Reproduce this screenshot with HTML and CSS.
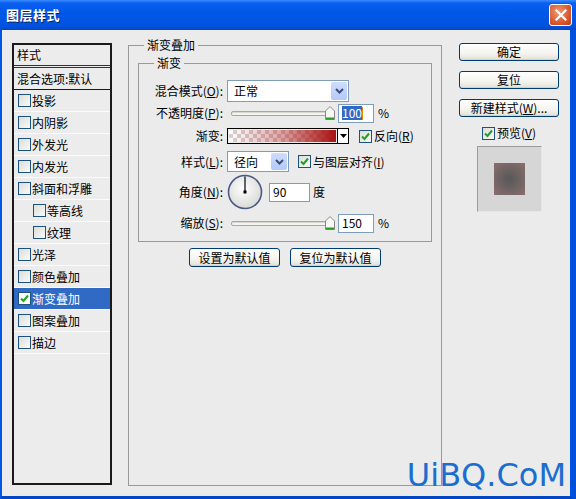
FILE: index.html
```html
<!DOCTYPE html>
<html lang="zh-CN">
<head>
  <meta charset="UTF-8"/>
  <title>图层样式</title>
  <link rel="stylesheet" href="styles.css">
</head>
<body>
  <div class="window">

    <!-- Title bar -->
    <div class="titlebar">
      <span class="title">图层样式</span>
      <span class="close">
        <svg width="12" height="12" viewBox="0 0 12 12"><path d="M1.5 1.5 L10.5 10.5 M10.5 1.5 L1.5 10.5" stroke="#fff" stroke-width="2.2" stroke-linecap="square"/></svg>
      </span>
    </div>

    <div class="frame">

      <!-- Styles list -->
      <ul class="styles-list">
        <li class="list-head">样式</li>
        <li class="list-blend">混合选项:默认</li>
        <li><span class="cb"></span>投影</li>
        <li><span class="cb"></span>内阴影</li>
        <li><span class="cb"></span>外发光</li>
        <li><span class="cb"></span>内发光</li>
        <li><span class="cb"></span>斜面和浮雕</li>
        <li class="sub"><span class="cb"></span>等高线</li>
        <li class="sub"><span class="cb"></span>纹理</li>
        <li><span class="cb"></span>光泽</li>
        <li><span class="cb"></span>颜色叠加</li>
        <li class="selected"><span class="cb"><svg width="9" height="9" viewBox="0 0 9 9"><path d="M1 4.5 L3.5 7 L8 1.5" fill="none" stroke="#21a121" stroke-width="2"/></svg></span>渐变叠加</li>
        <li><span class="cb"></span>图案叠加</li>
        <li><span class="cb"></span>描边</li>
      </ul>

      <!-- Gradient overlay settings -->
      <fieldset class="group outer">
        <legend>渐变叠加</legend>
        <fieldset class="group inner">
          <legend>渐变</legend>

          <div class="row row-blend">
            <label>混合模式(<u>O</u>):</label>
            <div class="select select-wide">
              <span>正常</span>
              <span class="drop"><svg width="9" height="6" viewBox="0 0 9 6"><path d="M1 1 L4.5 4.5 L8 1" fill="none" stroke="#3c4f7a" stroke-width="2"/></svg></span>
            </div>
          </div>

          <div class="row row-opacity">
            <label>不透明度(<u>P</u>):</label>
            <div class="slider">
              <span class="track"></span>
              <svg class="thumb" width="10" height="14" viewBox="0 0 10 14"><path d="M0.5 5 L5 0.5 L9.5 5 L9.5 13.5 L0.5 13.5 Z" fill="#f7f7f4" stroke="#8a8a8a"/><path d="M1 12.5 H9" stroke="#21a121" stroke-width="2"/></svg>
            </div>
            <div class="field field-pct"><span class="sel">100</span><span class="caret"></span></div>
            <span class="unit">%</span>
          </div>

          <div class="row row-gradient">
            <label>渐变:</label>
            <div class="gradient">
              <span class="gradient-fill"></span>
              <span class="gradient-drop"><svg width="7" height="4" viewBox="0 0 7 4"><path d="M0 0 H7 L3.5 4 Z" fill="#000"/></svg></span>
            </div>
            <span class="cb cb-reverse"><svg width="9" height="9" viewBox="0 0 9 9"><path d="M1 4.5 L3.5 7 L8 1.5" fill="none" stroke="#21a121" stroke-width="2"/></svg></span>
            <span class="check-label">反向(<u>R</u>)</span>
          </div>

          <div class="row row-style">
            <label>样式(<u>L</u>):</label>
            <div class="select select-narrow">
              <span>径向</span>
              <span class="drop"><svg width="9" height="6" viewBox="0 0 9 6"><path d="M1 1 L4.5 4.5 L8 1" fill="none" stroke="#3c4f7a" stroke-width="2"/></svg></span>
            </div>
            <span class="cb cb-align"><svg width="9" height="9" viewBox="0 0 9 9"><path d="M1 4.5 L3.5 7 L8 1.5" fill="none" stroke="#21a121" stroke-width="2"/></svg></span>
            <span class="check-label">与图层对齐(<u>I</u>)</span>
          </div>

          <div class="row row-angle">
            <label>角度(<u>N</u>):</label>
            <svg class="dial" width="36" height="36" viewBox="0 0 36 36">
              <defs>
                <radialGradient id="dialFace" cx="45%" cy="40%" r="60%">
                  <stop offset="0" stop-color="#ffffff"/>
                  <stop offset="1" stop-color="#d9d9d6"/>
                </radialGradient>
              </defs>
              <circle cx="18" cy="18" r="16.5" fill="url(#dialFace)" stroke="#4a5b83" stroke-width="1.6"/>
              <path d="M18 18 V2.5" stroke="#000" stroke-width="1.2"/>
              <rect x="16.5" y="16.5" width="3" height="3" fill="#000"/>
            </svg>
            <div class="field field-angle">90</div>
            <span class="unit">度</span>
          </div>

          <div class="row row-scale">
            <label>缩放(<u>S</u>):</label>
            <div class="slider">
              <span class="track"></span>
              <svg class="thumb" width="10" height="14" viewBox="0 0 10 14"><path d="M0.5 5 L5 0.5 L9.5 5 L9.5 13.5 L0.5 13.5 Z" fill="#f7f7f4" stroke="#8a8a8a"/><path d="M1 12.5 H9" stroke="#21a121" stroke-width="2"/></svg>
            </div>
            <div class="field field-pct">150</div>
            <span class="unit">%</span>
          </div>
        </fieldset>

        <div class="defaults">
          <button class="btn btn-default">设置为默认值</button>
          <button class="btn btn-default">复位为默认值</button>
        </div>
      </fieldset>

      <!-- Dialog actions -->
      <div class="actions">
        <button class="btn">确定</button>
        <button class="btn">复位</button>
        <button class="btn">新建样式(<u>W</u>)...</button>
        <div class="preview-check">
          <span class="cb"><svg width="9" height="9" viewBox="0 0 9 9"><path d="M1 4.5 L3.5 7 L8 1.5" fill="none" stroke="#21a121" stroke-width="2"/></svg></span>
          <span class="check-label">预览(<u>V</u>)</span>
        </div>
        <div class="preview">
          <div class="preview-swatch"></div>
        </div>
      </div>
    </div>

    <div class="watermark">UiBQ.CoM</div>
  </div>
</body>
</html>
```

FILE: styles.css
```css
* { box-sizing: border-box; }
body {
  margin: 0;
  font-family: "Noto Sans CJK SC", "Liberation Sans", sans-serif;
  font-size: 12px;
  line-height: 14px;
  color: #000;
  background: #ebebeb;
}
u { text-decoration: underline; text-underline-offset: 1px; }

/* Window shell */
.window {
  position: relative;
  width: 576px; height: 499px;
  display: flex; flex-direction: column;
  overflow: hidden;
}
.titlebar {
  height: 30px;
  flex-shrink: 0;
  display: flex; align-items: center;
  justify-content: space-between;
  padding: 0 4px 1px 6px;
  background: linear-gradient(#3a8dff 0, #0a5fef 3px, #0058e8 40%, #0053e0 85%, #0446c4 100%);
}
.title {
  color: #fff;
  font-weight: bold;
  font-size: 13px;
  text-shadow: 1px 1px 0 #0a246a;
  letter-spacing: 0.5px;
}
.close {
  width: 23px; height: 22px;
  display: flex; align-items: center; justify-content: center;
  border: 1px solid #fff;
  border-radius: 3px;
  background: radial-gradient(circle at 40% 35%, #f09a78, #d9592f 60%, #b83d17);
}
.frame {
  flex: 1;
  display: flex;
  align-items: flex-start;
  padding: 13px 0 10px 10px;
  border-left: 2px solid #0054e6;
  border-right: 6px solid #0050dd;
  border-bottom: 4px solid #0047c8;
  background: #ebebeb;
}

/* Left styles list */
.styles-list {
  list-style: none;
  margin: 0; padding: 0;
  width: 100px; height: 442px;
  border: 2px solid #1a1a1a;
  background: #ececec;
  flex-shrink: 0;
}
.styles-list li {
  height: 22px;
  display: flex; align-items: center;
  gap: 1px;
  padding-left: 4px;
  border-bottom: 1px solid #fbfbfb;
  white-space: nowrap;
}
.styles-list li.list-head {
  height: 23px;
  padding-left: 3px;
  border-bottom: 3px double #333;
}
.styles-list li.list-blend {
  height: 22px;
  padding-left: 3px;
  border-bottom: 1px solid #1a1a1a;
}
.styles-list li.sub { padding-left: 19px; }
.styles-list li.selected {
  background: #316ac5;
  color: #fff;
}

/* Checkbox */
.cb {
  width: 13px; height: 13px;
  flex-shrink: 0;
  display: inline-flex; align-items: center; justify-content: center;
  border: 1px solid #1c5180;
  background: linear-gradient(135deg, #dcdcd7, #fafaf8);
}
.selected .cb { background: #fff; }

/* Group boxes */
.group {
  margin: 0;
  border: 1px solid #999;
  min-width: 0;
}
.group legend {
  padding: 0 3px;
  line-height: 14px;
}
.outer {
  width: 314px; height: 448px;
  margin: -5px 17px 0 16px;
  padding: 4px 9px 0 9px;
  flex-shrink: 0;
}
.outer > legend { margin-left: 6px; }
.inner {
  padding: 10px 0 7px 4px;
}
.inner > legend { margin-left: 11px; }

/* Form rows */
.row {
  display: flex; align-items: center;
  white-space: nowrap;
}
.row label {
  width: 84px;
  padding-right: 4px;
  text-align: right;
  flex-shrink: 0;
}
.row-blend { height: 22px; }
.row-opacity { height: 22px; }
.row-gradient { height: 20px; margin-top: 2px; }
.row-style { height: 21px; margin-top: 5px; }
.row-angle { height: 36px; margin-top: 2px; }
.row-scale { height: 22px; margin-top: 2px; }

.select {
  height: 100%;
  display: flex; align-items: center; justify-content: space-between;
  border: 1px solid #7f9db9;
  background: #fff;
  padding-left: 6px;
}
.select-wide { width: 122px; }
.select-narrow { width: 62px; }
.drop {
  width: 16px;
  align-self: stretch;
  margin: 1px;
  display: flex; align-items: center; justify-content: center;
  background: linear-gradient(#cfdcfd, #b4c9f9);
  border-radius: 2px;
}

.slider {
  width: 111px;
  display: flex; align-items: center;
  padding-left: 4px;
}
.track {
  width: 97px; height: 5px;
  border: 1px solid #a7a6a0;
  border-radius: 2px;
  background: #f4f3ee;
  box-shadow: inset 0 1px 0 #d7d6d0;
}
.thumb { margin: 0 3px 0 -3px; }

.field {
  height: 19px;
  border: 1px solid #7f9db9;
  background: #fff;
  padding-left: 3px;
  display: flex; align-items: center;
}
.field-pct { width: 36px; }
.field-angle { width: 41px; margin-left: 6px; }
.sel {
  background: #316ac5;
  color: #fff;
}
.caret {
  width: 1px; height: 13px;
  background: #e08a00;
}
.unit { margin-left: 4px; }
.row-angle .unit { margin-left: 3px; }

.gradient {
  width: 122px; height: 16px;
  display: flex;
  border: 1px solid #000;
}
.gradient-fill {
  flex: 1;
  background:
    linear-gradient(to right, rgba(175, 20, 20, 0) 0%, rgba(175, 20, 20, 0.4) 50%, #a81212 100%),
    repeating-conic-gradient(#d4d4d4 0 25%, #ffffff 0 50%) 0 0 / 8px 8px;
  margin: 1px;
}
.gradient-drop {
  width: 11px;
  border-left: 1px solid #000;
  background: #fff;
  display: flex; align-items: center; justify-content: center;
}
.cb-reverse { margin-left: 10px; }
.cb-align { margin-left: 9px; }
.check-label { margin-left: 2px; }

/* Buttons */
.btn {
  font-family: inherit;
  font-size: 12px;
  line-height: 14px;
  color: #000;
  padding: 0;
  border: 1px solid #003c74;
  border-radius: 3px;
  background: linear-gradient(#ffffff, #f4f3ee 60%, #e3e0d5);
  box-shadow: inset 0 -1px 0 #d6d0c5;
  white-space: nowrap;
}
.defaults {
  display: flex; justify-content: center;
  gap: 10px;
  margin-top: 6px;
}
.btn-default { width: 91px; height: 19px; }

/* Right actions */
.actions {
  width: 100px;
  display: flex; flex-direction: column; align-items: center;
  gap: 10px;
}
.actions .btn { width: 100px; height: 18px; }
.preview-check {
  display: flex; align-items: center;
  height: 14px;
  margin-top: -1px;
}
.preview {
  width: 65px; height: 66px;
  margin-top: -4px;
  display: flex; align-items: center; justify-content: center;
  background: #d6d6d6;
  border-top: 1px solid #9c9c9c;
  border-left: 1px solid #9c9c9c;
  border-right: 1px solid #e6e6e6;
  border-bottom: 1px solid #e6e6e6;
}
.preview-swatch {
  width: 31px; height: 32px;
  background: radial-gradient(circle, #585858 0%, #6d6262 45%, #8c6e6e 100%);
}

/* Watermark */
.watermark {
  position: absolute;
  right: 10px; bottom: 8px;
  font-family: "DejaVu Sans", sans-serif;
  font-size: 32px;
  line-height: 32px;
  color: #1c6dd0;
}
```
